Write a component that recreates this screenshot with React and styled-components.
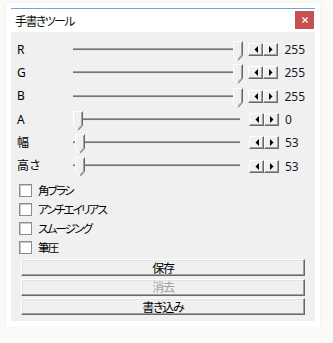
import React from "react";
import styled, { createGlobalStyle } from "styled-components";

const Global = createGlobalStyle`
  html, body { margin: 0; padding: 0; background: #fafaf8; }
  body {
    font-family: "Segoe UI", "Noto Sans", "Noto Sans CJK JP", sans-serif;
    font-size: 12px;
    color: #000;
  }
`;

const Frame = styled.div`
  margin: 3px 0 0 6px;
  width: 314px;
  padding: 5px 5px 5px;
  box-sizing: border-box;
  background: #fff;
  box-shadow: 0 1px 4px rgba(0, 0, 0, 0.06);
`;

const Window = styled.div`
  border-top: 1px solid #5aaee0;
  background: #fff;
`;

const TitleBar = styled.div`
  height: 23px;
  display: flex;
  align-items: flex-start;
  justify-content: space-between;
  padding-left: 4px;
`;

const Title = styled.div`
  font-family: "Noto Sans CJK JP", sans-serif;
  font-feature-settings: "palt";
  font-size: 12px;
  letter-spacing: -1.6px;
  line-height: 23px;
  color: #111;
`;

const Close = styled.div`
  width: 19px;
  height: 18px;
  margin: 2px 1px 0 0;
  background: #c75050;
  display: flex;
  align-items: center;
  justify-content: center;
`;

const Body = styled.div`
  background: #f0f0f0;
  padding: 6px 10px 6px 6px;
  display: flex;
  flex-direction: column;
`;

const Row = styled.div`
  height: 23.3px;
  display: flex;
  align-items: center;
`;

const Label = styled.div`
  width: 56px;
  font-family: "Segoe UI", "Noto Sans", "Noto Sans CJK JP", sans-serif;
  font-size: 12px;
  line-height: 14px;
`;

const Slider = styled.div`
  position: relative;
  width: 171px;
  height: 100%;
`;

const Track = styled.div`
  position: absolute;
  left: 0;
  top: 10px;
  width: 167px;
  height: 3px;
  box-sizing: border-box;
  border-top: 1px solid #a0a0a0;
  border-bottom: 1px solid #e8e8e8;
  background: #747474;
`;

const ThumbWrap = styled.svg`
  position: absolute;
  top: 3px;
`;

const Spin = styled.div`
  margin-left: 5px;
  display: flex;
  height: 13px;
`;

const SpinBtn = styled.div`
  width: 15px;
  height: 13px;
  box-sizing: border-box;
  background: #f0f0f0;
  border-top: 1px solid #fff;
  border-left: 1px solid #fff;
  border-right: 1px solid #696969;
  border-bottom: 1px solid #696969;
  box-shadow: inset -1px -1px 0 #a0a0a0;
  display: flex;
  align-items: center;
  justify-content: center;
`;

const Value = styled.div`
  margin-left: 6px;
  font-size: 12px;
  color: #1a1a2a;
`;

const Checks = styled.div`
  margin-top: 3px;
  padding-left: 2px;
  display: flex;
  flex-direction: column;
`;

const CheckRow = styled.div`
  height: 19px;
  display: flex;
  align-items: center;
`;

const Box = styled.div`
  width: 13px;
  height: 13px;
  box-sizing: border-box;
  background: #fff;
  border: 1px solid #8c8c8c;
  box-shadow: inset 1px 1px 0 #c8c8c8;
`;

const CheckText = styled.div`
  margin-left: 6px;
  font-family: "Noto Sans CJK JP", sans-serif;
  font-feature-settings: "palt";
  font-size: 11.5px;
  letter-spacing: -1.8px;
  line-height: 14px;
`;

const Buttons = styled.div`
  margin-top: 2.5px;
  padding-left: 4px;
  display: flex;
  flex-direction: column;
  gap: 2.5px;
`;

const PushButton = styled.div`
  height: 17px;
  box-sizing: border-box;
  background: #f0f0f0;
  border-top: 1px solid #fff;
  border-left: 1px solid #fff;
  border-right: 1px solid #696969;
  border-bottom: 1px solid #696969;
  box-shadow: inset -1px -1px 0 #a0a0a0, inset 1px 1px 0 #e3e3e3;
  display: flex;
  align-items: center;
  justify-content: center;
  font-family: "Noto Sans CJK JP", sans-serif;
  font-feature-settings: "palt";
  font-size: 12px;
  letter-spacing: -1.2px;
  line-height: 14px;
  color: ${(p) => (p.disabled ? "#a0a0a0" : "#000")};
`;

function Thumb({ left }) {
  return (
    <ThumbWrap width="11" height="21" viewBox="0 0 11 21" style={{ left }}>
      <path d="M0.5 0.5 H9.5 V14.5 L5 19.5 L0.5 14.5 Z" fill="#f0f0f0" />
      <path d="M0.5 14.5 V0.5 H9.5" fill="none" stroke="#ffffff" />
      <path d="M9.5 0.5 V14.5 L5 19.5" fill="none" stroke="#696969" />
      <path d="M8.5 1.5 V14 L5 18" fill="none" stroke="#a0a0a0" />
      <path d="M0.5 14.5 L5 19.5" fill="none" stroke="#ffffff" />
    </ThumbWrap>
  );
}

function Arrow({ dir }) {
  return (
    <svg width="4" height="7" viewBox="0 0 4 7">
      {dir === "left" ? (
        <path d="M4 0 V7 L0.5 3.5 Z" fill="#000" />
      ) : (
        <path d="M0 0 V7 L3.5 3.5 Z" fill="#000" />
      )}
    </svg>
  );
}

const rows = [
  { label: "R", value: 255, pos: 160 },
  { label: "G", value: 255, pos: 160 },
  { label: "B", value: 255, pos: 160 },
  { label: "A", value: 0, pos: 0 },
  { label: "幅", value: 53, pos: 2 },
  { label: "高さ", value: 53, pos: 2 },
];

const checks = ["角ブラシ", "アンチエイリアス", "スムージング", "筆圧"];

export default function App() {
  return (
    <>
      <Global />
      <Frame>
        <Window>
          <TitleBar>
            <Title>手書きツール</Title>
            <Close>
              <svg width="6" height="6" viewBox="0 0 6 6">
                <path d="M0.5 0.5 L5.5 5.5 M5.5 0.5 L0.5 5.5" stroke="#fff" strokeWidth="1.3" />
              </svg>
            </Close>
          </TitleBar>
          <Body>
            {rows.map((r) => (
              <Row key={r.label}>
                <Label>{r.label}</Label>
                <Slider>
                  <Track />
                  <Thumb left={r.pos} />
                </Slider>
                <Spin>
                  <SpinBtn>
                    <Arrow dir="left" />
                  </SpinBtn>
                  <SpinBtn>
                    <Arrow dir="right" />
                  </SpinBtn>
                </Spin>
                <Value>{r.value}</Value>
              </Row>
            ))}
            <Checks>
              {checks.map((c) => (
                <CheckRow key={c}>
                  <Box />
                  <CheckText>{c}</CheckText>
                </CheckRow>
              ))}
            </Checks>
            <Buttons>
              <PushButton>保存</PushButton>
              <PushButton disabled>消去</PushButton>
              <PushButton>書き込み</PushButton>
            </Buttons>
          </Body>
        </Window>
      </Frame>
    </>
  );
}
